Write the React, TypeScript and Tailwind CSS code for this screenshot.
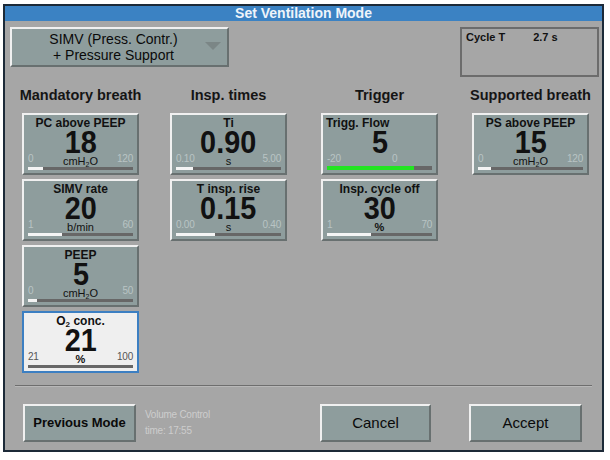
import React from 'react';

type Knob = {
  title: React.ReactNode;
  value: string;
  unit?: React.ReactNode;
  min: string;
  max: string;
  fill: number;
  green?: boolean;
  leftTitle?: boolean;
  selected?: boolean;
};

const H2O = (
  <>
    cmH<sub className="text-[7px] align-baseline relative top-[2px]">2</sub>O
  </>
);

const columns: { header: string; knobs: Knob[] }[] = [
  {
    header: 'Mandatory breath',
    knobs: [
      { title: 'PC above PEEP', value: '18', unit: H2O, min: '0', max: '120', fill: 0.14 },
      { title: 'SIMV rate', value: '20', unit: 'b/min', min: '1', max: '60', fill: 0.32 },
      { title: 'PEEP', value: '5', unit: H2O, min: '0', max: '50', fill: 0.09 },
      {
        title: (
          <>
            O<sub className="text-[8px] align-baseline relative top-[2px]">2</sub> conc.
          </>
        ),
        value: '21',
        unit: <span className="font-bold">%</span>,
        min: '21',
        max: '100',
        fill: 0,
        selected: true,
      },
    ],
  },
  {
    header: 'Insp. times',
    knobs: [
      { title: 'Ti', value: '0.90', unit: 's', min: '0.10', max: '5.00', fill: 0.16 },
      { title: 'T insp. rise', value: '0.15', unit: 's', min: '0.00', max: '0.40', fill: 0.375 },
    ],
  },
  {
    header: 'Trigger',
    knobs: [
      { title: 'Trigg. Flow', value: '5', min: '-20', max: '0', fill: 0.83, green: true, leftTitle: true },
      { title: 'Insp. cycle off', value: '30', unit: <span className="font-bold">%</span>, min: '1', max: '70', fill: 0.42 },
    ],
  },
  {
    header: 'Supported breath',
    knobs: [{ title: 'PS above PEEP', value: '15', unit: H2O, min: '0', max: '120', fill: 0.12 }],
  },
];

function KnobBox({ k }: { k: Knob }) {
  const face = k.selected
    ? 'bg-[#efefef] border-2 border-[#3c7fc2]'
    : 'bg-[#8e9d9d] border-2 border-t-[#f0f0f0] border-l-[#f0f0f0] border-r-[#687070] border-b-[#687070]';
  const rangeColor = k.selected ? 'text-[#555]' : 'text-[#b9c4c4]';
  return (
    <div className={`w-[117px] h-[62px] flex flex-col px-[2px] text-[#111] ${face}`}>
      <div
        className={`h-[14px] text-[12px] font-bold leading-[14px] mt-[1px] whitespace-nowrap ${k.leftTitle ? 'text-left pl-[1px]' : 'text-center'}`}
      >
        {k.title}
      </div>
      <div className="h-[25px] flex justify-center overflow-visible">
        <span className="inline-block text-[32px] font-bold leading-[25px] scale-x-90">{k.value}</span>
      </div>
      <div className="relative h-[12px] text-[10px] leading-[12px]">
        <span className={`absolute left-[2px] top-[-2px] tracking-tight ${rangeColor}`}>{k.min}</span>
        <span
          className={`absolute top-[-2px] tracking-tight ${rangeColor} ${k.green ? 'left-[67px]' : 'right-[2px]'}`}
        >
          {k.max}
        </span>
        {k.unit && <div className="text-center text-[11px] leading-[12px] text-[#111]">{k.unit}</div>}
      </div>
      <div className="mt-auto mb-[3px] mx-[2px] h-[5px] bg-[#676767] flex">
        <div
          className={k.green ? 'h-full bg-[#22e422]' : 'h-full bg-[#f4f4f4]'}
          style={{ width: `${k.fill * 100}%` }}
        />
      </div>
    </div>
  );
}

function Btn({ children, className }: { children: React.ReactNode; className: string }) {
  return (
    <div
      className={`h-[38px] flex items-center justify-center bg-[#8e9d9d] border-2 border-t-[#f0f0f0] border-l-[#f0f0f0] border-r-[#687070] border-b-[#687070] text-[#0a0a0a] ${className}`}
    >
      {children}
    </div>
  );
}

export default function App() {
  return (
    <div className="w-[610px] h-[460px] bg-white overflow-hidden" style={{ fontFamily: '"Liberation Sans", Arial, sans-serif' }}>
      <div className="ml-[3px] mt-[4px] w-[601px] h-[448px] border-2 border-[#1c2a38] bg-[#a6a6a6] flex flex-col">
        <div className="h-[15px] bg-[#3b82c3] text-[#eef4fa] text-[14px] font-bold leading-[15px] text-center">
          Set Ventilation Mode
        </div>

        <div className="flex mt-[6px]">
          <div className="ml-[5px] w-[219px] h-[40px] flex items-center bg-[#8e9d9d] border-2 border-t-[#f0f0f0] border-l-[#f0f0f0] border-r-[#687070] border-b-[#687070]">
            <div className="flex-1 text-center text-[14px] leading-[16px] text-[#0a0a0a] pl-[10px]">
              SIMV (Press. Contr.)
              <br />+ Pressure Support
            </div>
            <svg width="16" height="8" viewBox="0 0 16 8" className="mr-[6px] mt-[-2px]">
              <polygon points="0,0 16,0 8,8" fill="#7b8686" />
            </svg>
          </div>
          <div className="ml-auto mr-[3px] w-[139px] h-[50px] border-2 border-[#6c6c6c] px-[4px] pt-[2px] text-[11px] leading-[13px] font-bold text-[#111] flex items-start">
            <span>Cycle T</span>
            <span className="ml-[28px]">2.7 s</span>
          </div>
        </div>

        <div className="flex pl-[17px] mt-[10px]">
          {columns.map((col, i) => (
            <div key={col.header} className={`w-[117px] flex flex-col ${i === 0 ? '' : i === 1 ? 'ml-[31px]' : 'ml-[34px]'}`}>
              <div className="h-[17px] flex justify-center whitespace-nowrap text-[14.5px] font-bold leading-[17px] text-[#151515]">
                {col.header}
              </div>
              <div className="mt-[9px] flex flex-col gap-[4px]">
                {col.knobs.map((k, j) => (
                  <KnobBox key={j} k={k} />
                ))}
              </div>
            </div>
          ))}
        </div>

        <div className="mt-auto mx-[10px] h-[1px] bg-[#6e6e6e]" />
        <div className="mx-[10px] h-[1px] bg-[#b8b8b8]" />
        <div className="flex items-center mt-[17px] mb-[8px] pl-[18px] pr-[20px]">
          <Btn className="w-[113px] text-[13px] font-bold">Previous Mode</Btn>
          <div className="ml-[9px] text-[10px] leading-[16px] text-[#cdcdcd] tracking-tight">
            Volume Control
            <br />
            time: 17:55
          </div>
          <Btn className="ml-auto w-[111px] text-[15px]">Cancel</Btn>
          <Btn className="ml-[38px] w-[113px] text-[15px]">Accept</Btn>
        </div>
      </div>
    </div>
  );
}
